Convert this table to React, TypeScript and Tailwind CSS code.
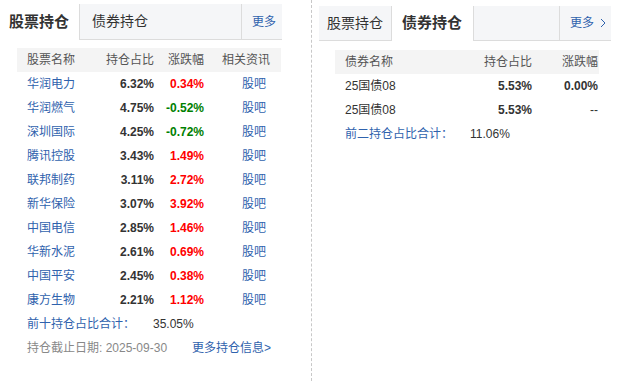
import React from "react";

type Stock = { name: string; pct: string; chg: string };

const stocks: Stock[] = [
  { name: "华润电力", pct: "6.32%", chg: "0.34%" },
  { name: "华润燃气", pct: "4.75%", chg: "-0.52%" },
  { name: "深圳国际", pct: "4.25%", chg: "-0.72%" },
  { name: "腾讯控股", pct: "3.43%", chg: "1.49%" },
  { name: "联邦制药", pct: "3.11%", chg: "2.72%" },
  { name: "新华保险", pct: "3.07%", chg: "3.92%" },
  { name: "中国电信", pct: "2.85%", chg: "1.46%" },
  { name: "华新水泥", pct: "2.61%", chg: "0.69%" },
  { name: "中国平安", pct: "2.45%", chg: "0.38%" },
  { name: "康方生物", pct: "2.21%", chg: "1.12%" },
];

const bonds = [
  { name: "25国债08", pct: "5.53%", chg: "0.00%" },
  { name: "25国债08", pct: "5.53%", chg: "--" },
];

const font = { fontFamily: '"Liberation Sans", "Noto Sans CJK SC", sans-serif' };

function StockPanel() {
  return (
    <div className="w-[282px] pt-[4px]">
      {/* tabs */}
      <div className="flex h-[36px]">
        <div className="w-[79px] pl-[9px] flex items-center text-[15px] font-bold text-[#333]">股票持仓</div>
        <div className="flex-1 flex bg-[#f5f6f8] border-l border-b border-[#dcdcdc]">
          <div className="flex-1 pl-[12px] flex items-center text-[14px] text-[#333]">债券持仓</div>
          <div className="w-[41px] border-l border-[#dcdcdc] pl-[10px] flex items-center text-[12px] text-[#2f62ad]">
            更多
          </div>
        </div>
      </div>

      <div className="mt-[8px] ml-[17px] w-[264px] text-[12px]">
        <div className="grid grid-cols-[83px_54px_50px_1fr] h-[24px] items-center bg-[#f4f4f4] text-[#555]">
          <span className="pl-[10px]">股票名称</span>
          <span className="text-right">持仓占比</span>
          <span className="text-right">涨跌幅</span>
          <span className="pl-[18px]">相关资讯</span>
        </div>
        {stocks.map((s) => (
          <div key={s.name} className="grid grid-cols-[83px_54px_50px_1fr] h-[24px] items-center">
            <span className="pl-[10px] text-[#2f62ad]">{s.name}</span>
            <span className="text-right font-bold text-[#333]">{s.pct}</span>
            <span className={`text-right font-bold ${s.chg.startsWith("-") ? "text-[#008000]" : "text-[#ff0000]"}`}>
              {s.chg}
            </span>
            <span className="pl-[38px] text-[#2f62ad]">股吧</span>
          </div>
        ))}
        <div className="flex h-[24px] items-center">
          <span className="pl-[10px] w-[136px] text-[#2f62ad]">前十持仓占比合计：</span>
          <span className="text-[#333]">35.05%</span>
        </div>
        <div className="flex h-[24px] items-center">
          <span className="pl-[10px] w-[175px] text-[#888]">持仓截止日期: 2025-09-30</span>
          <span className="text-[#2f62ad]">更多持仓信息&gt;</span>
        </div>
      </div>
    </div>
  );
}

function BondPanel() {
  return (
    <div className="w-[292px] pt-[6px]">
      <div className="flex h-[35px]">
        <div className="w-[73px] pl-[8px] flex items-center bg-[#f5f6f8] border-b border-r border-[#dcdcdc] text-[14px] text-[#333]">
          股票持仓
        </div>
        <div className="w-[82px] pl-[10px] flex items-center border-r border-[#dcdcdc] text-[15px] font-bold text-[#333]">
          债券持仓
        </div>
        <div className="flex-1 flex bg-[#f5f6f8] border-b border-[#dcdcdc]">
          <div className="flex-1" />
          <div className="w-[52px] border-l border-[#dcdcdc] pl-[10px] flex items-center text-[12px] text-[#2f62ad]">
            更多
            <svg width="6" height="10" viewBox="0 0 6 10" className="ml-[6px]">
              <path d="M1 1l4 4-4 4" fill="none" stroke="#2f62ad" strokeWidth="1" />
            </svg>
          </div>
        </div>
      </div>

      <div className="mt-[9px] ml-[16px] w-[264px] text-[12px]">
        <div className="grid grid-cols-[125px_72px_1fr] h-[24px] items-center bg-[#f4f4f4] text-[#555]">
          <span className="pl-[10px]">债券名称</span>
          <span className="text-right">持仓占比</span>
          <span className="text-right pr-[1px]">涨跌幅</span>
        </div>
        {bonds.map((b, i) => (
          <div key={i} className="grid grid-cols-[125px_72px_1fr] h-[24px] items-center">
            <span className="pl-[10px] text-[#333]">{b.name}</span>
            <span className="text-right font-bold text-[#333]">{b.pct}</span>
            <span className={`text-right pr-[1px] text-[#333] ${b.chg === "--" ? "" : "font-bold"}`}>{b.chg}</span>
          </div>
        ))}
        <div className="flex h-[24px] items-center">
          <span className="pl-[10px] w-[135px] text-[#2f62ad]">前二持仓占比合计：</span>
          <span className="text-[#333]">11.06%</span>
        </div>
      </div>
    </div>
  );
}

export default function App() {
  return (
    <div className="w-[623px] h-[381px] bg-white flex" style={font}>
      <div className="w-[311px]">
        <StockPanel />
      </div>
      <div className="border-l border-dashed border-[#c8c8c8] pl-[7px]">
        <BondPanel />
      </div>
    </div>
  );
}
